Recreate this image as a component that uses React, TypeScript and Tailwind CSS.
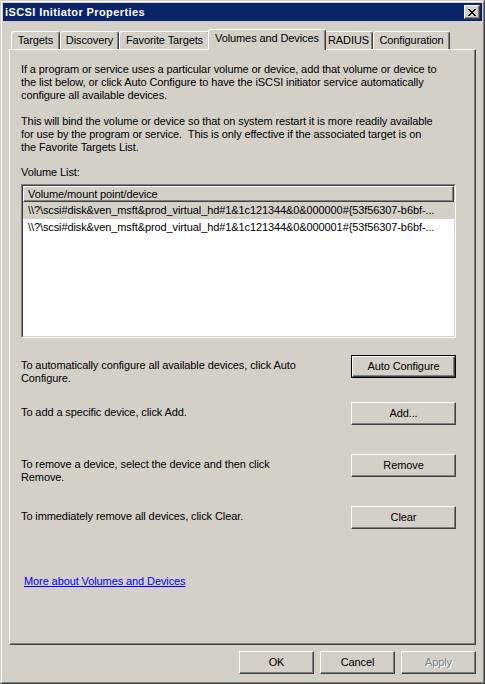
import type { ReactNode } from "react"

const raised =
  "border border-t-white border-l-white border-r-[#404040] border-b-[#404040] shadow-[inset_-1px_-1px_0_#808080]"

function Btn({
  children,
  w,
  isDefault,
  disabled,
}: {
  children: ReactNode
  w: string
  isDefault?: boolean
  disabled?: boolean
}) {
  const inner = (
    <div
      className={`h-full w-full flex items-center justify-center bg-[#d4d0c8] ${raised} ${
        disabled ? "text-[#808080] [text-shadow:1px_1px_0_#ffffff]" : "text-black"
      }`}
    >
      {children}
    </div>
  )
  if (isDefault) {
    return <div className={`${w} h-[23px] border border-black shrink-0`}>{inner}</div>
  }
  return <div className={`${w} h-[23px] shrink-0`}>{inner}</div>
}

function Tab({ label, w, selected }: { label: string; w: string; selected?: boolean }) {
  if (selected) {
    return (
      <div
        className={`${w} h-[21px] -mb-px -mx-[2px] relative z-10 bg-[#d4d0c8] border-t border-l border-r border-t-white border-l-white border-r-[#404040] shadow-[inset_-1px_0_0_#808080] rounded-t-[3px] flex items-start justify-center pt-[2px]`}
      >
        {label}
      </div>
    )
  }
  return (
    <div
      className={`${w} h-[18px] border-t border-l border-r border-t-white border-l-white border-r-[#404040] shadow-[inset_-1px_0_0_#808080] rounded-t-[3px] flex items-center justify-center`}
    >
      {label}
    </div>
  )
}

function CloseGlyph() {
  const rows = ["11000011", "01100110", "00111100", "00011000", "00111100", "01100110", "11000011"]
  return (
    <svg width="8" height="7" viewBox="0 0 8 7" shapeRendering="crispEdges">
      {rows.map((r, y) =>
        r.split("").map((c, x) => (c === "1" ? <rect key={`${x}-${y}`} x={x} y={y} width="1" height="1" fill="#000" /> : null))
      )}
    </svg>
  )
}

const devices = [
  "\\\\?\\scsi#disk&ven_msft&prod_virtual_hd#1&1c121344&0&000000#{53f56307-b6bf-...",
  "\\\\?\\scsi#disk&ven_msft&prod_virtual_hd#1&1c121344&0&000001#{53f56307-b6bf-...",
]

export default function App() {
  return (
    <div className="w-[485px] h-[684px] bg-[#d4d0c8] font-['Liberation_Sans',Arial,sans-serif] text-[11px] leading-[13px] tracking-[-0.1px] text-black select-none">
      <div className="w-full h-full border border-t-[#d4d0c8] border-l-[#d4d0c8] border-r-[#404040] border-b-[#404040]">
        <div className="w-full h-full border border-t-white border-l-white border-r-[#808080] border-b-[#808080] p-px flex flex-col">
          {/* title bar */}
          <div className="h-[18px] bg-[#0a246a] flex items-center justify-between pl-[2px] pr-[2px] shrink-0">
            <span className="text-white font-bold tracking-[0.4px]">iSCSI Initiator Properties</span>
            <div className={`w-[16px] h-[14px] bg-[#d4d0c8] flex items-center justify-center ${raised}`}>
              <CloseGlyph />
            </div>
          </div>

          {/* tabs */}
          <div className="flex items-end pl-[8px] mt-[8px] h-[20px] shrink-0">
            <Tab label="Targets" w="w-[49px]" />
            <Tab label="Discovery" w="w-[59px]" />
            <Tab label="Favorite Targets" w="w-[91px]" />
            <Tab label="Volumes and Devices" w="w-[118px]" selected />
            <Tab label="RADIUS" w="w-[49px]" />
            <Tab label="Configuration" w="w-[77px]" />
          </div>

          {/* tab panel */}
          <div className="ml-[6px] w-[467px] h-[596px] shrink-0 border border-t-white border-l-white border-r-[#404040] border-b-[#404040] shadow-[inset_-1px_-1px_0_#808080]">
            <div className="ml-[11px] w-[435px] pt-[13px] flex flex-col">
              <p className="whitespace-pre">
                If a program or service uses a particular volume or device, add that volume or device to
                <br />
                the list below, or click Auto Configure to have the iSCSI initiator service automatically
                <br />
                configure all available devices.
              </p>
              <p className="whitespace-pre mt-[13px]">
                This will bind the volume or device so that on system restart it is more readily available
                <br />
                {"for use by the program or service.  This is only effective if the associated target is on"}
                <br />
                the Favorite Targets List.
              </p>
              <p className="mt-[12px]">Volume List:</p>

              {/* list box */}
              <div className="mt-[5px] w-[435px] h-[154px] border border-t-[#808080] border-l-[#808080] border-r-white border-b-white">
                <div className="w-full h-full border border-t-[#404040] border-l-[#404040] border-r-[#d4d0c8] border-b-[#d4d0c8] bg-white flex flex-col">
                  <div className={`h-[16px] shrink-0 bg-[#d4d0c8] ${raised} flex items-center pl-[4px]`}>
                    Volume/mount point/device
                  </div>
                  {devices.map((d, i) => (
                    <div
                      key={i}
                      className={`h-[17px] shrink-0 flex items-center pl-[5px] pr-[6px] ${i === 0 ? "bg-[#d4d0c8]" : ""}`}
                    >
                      <span className="whitespace-nowrap">{d}</span>
                    </div>
                  ))}
                </div>
              </div>

              {/* action rows */}
              <div className="mt-[17px] h-[47px] flex justify-between items-start">
                <p className="pt-[4px]">
                  To automatically configure all available devices, click Auto
                  <br />
                  Configure.
                </p>
                <Btn w="w-[105px]" isDefault>
                  Auto Configure
                </Btn>
              </div>
              <div className="h-[52px] flex justify-between items-start">
                <p className="pt-[4px]">To add a specific device, click Add.</p>
                <Btn w="w-[105px]">Add...</Btn>
              </div>
              <div className="h-[52px] flex justify-between items-start">
                <p className="pt-[4px]">
                  To remove a device, select the device and then click
                  <br />
                  Remove.
                </p>
                <Btn w="w-[105px]">Remove</Btn>
              </div>
              <div className="h-[23px] flex justify-between items-start">
                <p className="pt-[4px]">To immediately remove all devices, click Clear.</p>
                <Btn w="w-[105px]">Clear</Btn>
              </div>

              <p className="mt-[46px] pl-[3px]">
                <a className="text-[#0000ff] underline cursor-pointer">More about Volumes and Devices</a>
              </p>
            </div>
          </div>

          {/* dialog buttons */}
          <div className="flex justify-end gap-[6px] pr-[6px] mt-[6px]">
            <Btn w="w-[75px]">OK</Btn>
            <Btn w="w-[75px]">Cancel</Btn>
            <Btn w="w-[75px]" disabled>
              Apply
            </Btn>
          </div>
        </div>
      </div>
    </div>
  )
}
